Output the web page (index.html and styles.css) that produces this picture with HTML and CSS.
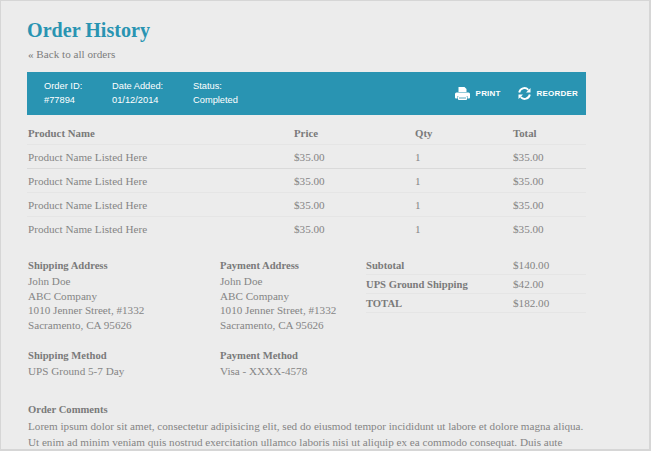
FILE: index.html
```html
<!DOCTYPE html>
<html lang="en">
<head>
    <meta charset="UTF-8">
    <meta name="viewport" content="width=device-width, initial-scale=1.0">
    <title>Order History</title>
    <link rel="stylesheet" href="styles.css">
</head>
<body>
    <div class="page">
        <h1>Order History</h1>
        <a class="back" href="#">« Back to all orders</a>

        <!-- Order info bar -->
        <div class="order-bar">
            <div class="order-field field-id">Order ID:<br>#77894</div>
            <div class="order-field field-date">Date Added:<br>01/12/2014</div>
            <div class="order-field">Status:<br>Completed</div>
            <div class="order-actions">
                <a class="action" href="#">
                    <svg width="15" height="13" viewBox="0 0 15 13"><path fill="#fff" d="M3.500 0h6l2 2v3h-8zM1.500 5.500h12A1.500 1.500 0 0 1 15 7v3.500q0 1-1 1h-1.500V9h-10v2.500H1q-1 0-1-1V7a1.500 1.500 0 0 1 1.500-1.500z"/><path fill="#a9d3df" stroke="#fff" d="M3.500 9.500h8v3h-8z"/></svg>
                    PRINT
                </a>
                <a class="action" href="#">
                    <svg width="13" height="13" viewBox="0 0 13 13"><path fill="none" stroke="#fff" stroke-width="1.900" d="M1.200 5.500A5.300 5.300 0 0 1 10.300 2.800M11.800 7.500A5.300 5.300 0 0 1 2.700 10.200"/><path fill="#fff" d="M12.500 1v4.500h-4.500zM0.500 12v-4.500h4.500z"/></svg>
                    REORDER
                </a>
            </div>
        </div>

        <!-- Products -->
        <table class="products">
            <tr><th class="col-name">Product Name</th><th class="col-price">Price</th><th class="col-qty">Qty</th><th>Total</th></tr>
            <tr class="row-dark"><td>Product Name Listed Here</td><td>$35.00</td><td>1</td><td>$35.00</td></tr>
            <tr><td>Product Name Listed Here</td><td>$35.00</td><td>1</td><td>$35.00</td></tr>
            <tr><td>Product Name Listed Here</td><td>$35.00</td><td>1</td><td>$35.00</td></tr>
            <tr class="row-last"><td>Product Name Listed Here</td><td>$35.00</td><td>1</td><td>$35.00</td></tr>
        </table>

        <!-- Addresses and totals -->
        <div class="details">
            <div class="info-col ship-col">
                <h4>Shipping Address</h4>
                <p>John Doe<br>ABC Company<br>1010 Jenner Street, #1332<br>Sacramento, CA 95626</p>
                <h4>Shipping Method</h4>
                <p>UPS Ground 5-7 Day</p>
            </div>
            <div class="info-col pay-col">
                <h4>Payment Address</h4>
                <p>John Doe<br>ABC Company<br>1010 Jenner Street, #1332<br>Sacramento, CA 95626</p>
                <h4>Payment Method</h4>
                <p>Visa - XXXX-4578</p>
            </div>
            <div class="totals">
                <div class="total-row"><b>Subtotal</b><span>$140.00</span></div>
                <div class="total-row"><b>UPS Ground Shipping</b><span>$42.00</span></div>
                <div class="total-row"><b>TOTAL</b><span>$182.00</span></div>
            </div>
        </div>

        <h4 class="comments-title">Order Comments</h4>
        <p class="comments">Lorem ipsum dolor sit amet, consectetur adipisicing elit, sed do eiusmod tempor incididunt ut labore et dolore magna aliqua. Ut enim ad minim veniam quis nostrud exercitation ullamco laboris nisi ut aliquip ex ea commodo consequat. Duis aute</p>
    </div>
</body>
</html>
```

FILE: styles.css
```css
/* Page frame */
html, body {
    height: 100%;
    margin: 0;
}
body {
    overflow: hidden;
    background-color: #ececec;
    font-family: "Liberation Serif", serif;
    font-size: 11.150px;
    color: #858585;
}
.page {
    box-sizing: border-box;
    width: 651px;
    height: 451px;
    padding: 17px 63px 0 26px;
    overflow: hidden;
    border: 1px solid #d6d6d6;
    border-width: 1px 2px 2px 1px;
}
h1 {
    margin: 0 0 5px;
    font-size: 20.100px;
    line-height: 24px;
    color: #2994b2;
}
.back {
    display: block;
    margin-left: 1px;
    line-height: 14px;
    color: #7c7c7c;
    text-decoration: none;
}

/* Order bar */
.order-bar {
    display: flex;
    align-items: center;
    height: 43px;
    margin-top: 11px;
    padding: 0 8px 0 17px;
    background-color: #2994b2;
    font-family: "Liberation Sans", sans-serif;
    font-size: 9.300px;
    line-height: 13.500px;
    color: #fff;
}
.order-field {
    white-space: nowrap;
}
.field-id {
    width: 68px;
}
.field-date {
    width: 81px;
}
.order-actions {
    display: flex;
    align-items: center;
    gap: 17px;
    margin-left: auto;
}
.action {
    display: flex;
    align-items: center;
    gap: 6px;
    font-size: 8px;
    font-weight: bold;
    letter-spacing: 0.200px;
    color: #fff;
    text-decoration: none;
}

/* Products table */
.products {
    width: 100%;
    border-collapse: collapse;
    table-layout: fixed;
    margin-top: 6px;
}
.products th, .products td {
    height: 23px;
    padding: 0 0 0 1px;
    border-bottom: 1px solid #e5e5e5;
    text-align: left;
}
.products .row-dark td {
    border-bottom-color: #dadada;
}
.products .row-last td {
    border-bottom: none;
}
.products th {
    font-size: 10.800px;
    font-weight: bold;
    color: #7a7a7a;
}
.col-name {
    width: 265px;
}
.col-price {
    width: 120px;
}
.col-qty {
    width: 97px;
}

/* Addresses and totals */
.details {
    display: flex;
    margin-top: 17px;
}
.info-col {
    padding-left: 1px;
}
.ship-col {
    width: 191px;
}
.pay-col {
    width: 146px;
}
h4 {
    margin: 0;
    font-size: 10.600px;
    line-height: 17px;
    color: #7a7a7a;
}
.info-col p {
    margin: 0 0 14px;
    line-height: 14.700px;
}
.totals {
    flex: 1;
    margin-top: -1px;
}
.total-row {
    display: flex;
    height: 18px;
    align-items: center;
    border-bottom: 1px solid #e5e5e5;
}
.total-row b {
    width: 147px;
    font-size: 10.600px;
    color: #7a7a7a;
}
.comments-title {
    margin: 8px 0 0 1px;
}
.comments {
    margin: 0 0 0 1px;
    line-height: 16px;
}
```
